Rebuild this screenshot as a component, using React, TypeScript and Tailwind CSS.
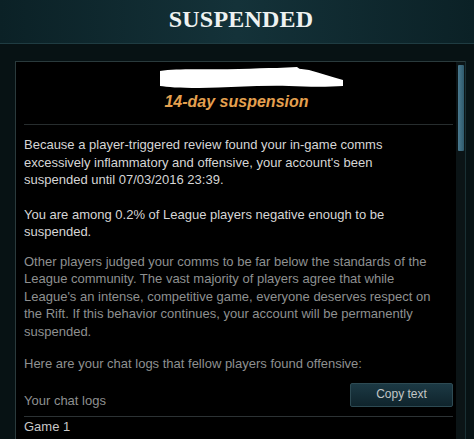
import React from 'react';

const body = "font-['Liberation_Sans',Arial,sans-serif]";

const Lines: React.FC<{ lines: string[]; className?: string }> = ({ lines, className }) => (
  <p className={`whitespace-nowrap ${className ?? ''}`}>
    {lines.map((l, i) => (
      <span key={i} className="block">{l}</span>
    ))}
  </p>
);

export default function App() {
  return (
    <div className={`w-[474px] h-[439px] overflow-hidden bg-[#071214] ${body}`}>
      <header className="h-[44px] border-b border-[#1f3c42] bg-gradient-to-r from-[#0b2126] via-[#143239] to-[#0b2126] flex items-center justify-center">
        <h1 className="font-['Liberation_Serif',serif] font-bold text-[24px] text-[#eef2f1] tracking-[0.2px] leading-none -mt-[6px] ml-[8px]">
          SUSPENDED
        </h1>
      </header>

      <div className="flex mt-[17px] pl-[15px] pr-[8px] h-[400px]">
        <div className="flex-1 flex bg-black border-l border-t border-[#2a3a3c] min-w-0">
          <div className="flex-1 pl-[8px] pr-[3px] text-[13px] leading-[17.5px] min-w-0">
            <div className="flex flex-col items-center pt-[5px] pb-[13px] border-b border-[#272d2e]">
              {/* redaction scribble */}
              <svg width="186" height="22" viewBox="0 0 186 22" className="ml-[26px]">
                <path
                  d="M1 4 C20 1 50 3 80 2 C110 1 130 0 150 3 C162 6 172 10 184 13 L184 19 C170 20 150 20 130 19 C100 18 70 21 40 21 C20 21 8 20 1 19 Z"
                  fill="#ffffff"
                />
                <path d="M118 1 L138 0 L146 6 L124 7 Z" fill="#ffffff" />
              </svg>
              <div className="mt-[4px] font-bold italic text-[16px] leading-[18px] text-[#e5a04f] -ml-[4px]">
                14-day suspension
              </div>
            </div>

            <Lines
              className="mt-[11px] text-[#d6d6d6]"
              lines={[
                'Because a player-triggered review found your in-game comms',
                "excessively inflammatory and offensive, your account's been",
                'suspended until 07/03/2016 23:39.',
              ]}
            />
            <Lines
              className="mt-[17px] text-[#d6d6d6]"
              lines={['You are among 0.2% of League players negative enough to be', 'suspended.']}
            />
            <Lines
              className="mt-[12px] text-[#8e9090]"
              lines={[
                'Other players judged your comms to be far below the standards of the',
                'League community. The vast majority of players agree that while',
                "League's an intense, competitive game, everyone deserves respect on",
                'the Rift. If this behavior continues, your account will be permanently',
                'suspended.',
              ]}
            />
            <p className="mt-[15px] text-[#8e9090]">Here are your chat logs that fellow players found offensive:</p>

            <div className="mt-[10px] flex items-end justify-between border-b border-[#2c3234] pb-[6px]">
              <span className="text-[#8e9090] text-[13px]">Your chat logs</span>
              <button className="w-[103px] h-[24px] mb-[3px] rounded-[2px] border border-[#2d4a53] bg-gradient-to-b from-[#1c3944] to-[#0f242c] text-[#c2c6c6] text-[12px]">
                Copy text
              </button>
            </div>
            <div className="pt-[1px] text-[#c8c8c8]">Game 1</div>
          </div>

          <div className="w-[9px] bg-[#0b1416] flex justify-center pt-[3px]">
            <div className="w-[6px] h-[86px] rounded-[1px] bg-gradient-to-r from-[#4a7a90] to-[#2f5a6c]" />
          </div>
        </div>
        <div className="w-0 border-l border-[#1a3034]" />
      </div>
    </div>
  );
}
